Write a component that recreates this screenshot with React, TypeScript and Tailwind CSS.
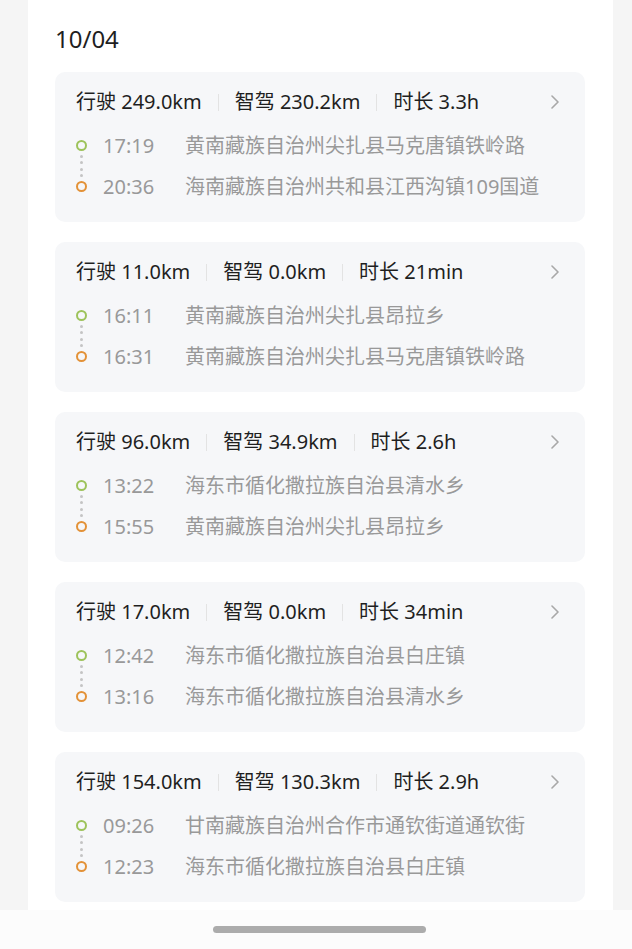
import React from 'react';

type Trip = {
  distance: string;
  smart: string;
  duration: string;
  startTime: string;
  startPlace: string;
  endTime: string;
  endPlace: string;
};

const trips: Trip[] = [
  {
    distance: '249.0km',
    smart: '230.2km',
    duration: '3.3h',
    startTime: '17:19',
    startPlace: '黄南藏族自治州尖扎县马克唐镇铁岭路',
    endTime: '20:36',
    endPlace: '海南藏族自治州共和县江西沟镇109国道',
  },
  {
    distance: '11.0km',
    smart: '0.0km',
    duration: '21min',
    startTime: '16:11',
    startPlace: '黄南藏族自治州尖扎县昂拉乡',
    endTime: '16:31',
    endPlace: '黄南藏族自治州尖扎县马克唐镇铁岭路',
  },
  {
    distance: '96.0km',
    smart: '34.9km',
    duration: '2.6h',
    startTime: '13:22',
    startPlace: '海东市循化撒拉族自治县清水乡',
    endTime: '15:55',
    endPlace: '黄南藏族自治州尖扎县昂拉乡',
  },
  {
    distance: '17.0km',
    smart: '0.0km',
    duration: '34min',
    startTime: '12:42',
    startPlace: '海东市循化撒拉族自治县白庄镇',
    endTime: '13:16',
    endPlace: '海东市循化撒拉族自治县清水乡',
  },
  {
    distance: '154.0km',
    smart: '130.3km',
    duration: '2.9h',
    startTime: '09:26',
    startPlace: '甘南藏族自治州合作市通钦街道通钦街',
    endTime: '12:23',
    endPlace: '海东市循化撒拉族自治县白庄镇',
  },
];

const Divider = () => <div className="mx-[16px] h-[17px] w-px bg-[#e3e3e3]" />;

const TripCard: React.FC<{ trip: Trip }> = ({ trip }) => (
  <div className="h-[150px] rounded-[10px] bg-[#f6f7f9] pl-[21px] pr-[26px] pt-[17px]">
    {/* Summary row */}
    <div className="flex h-[26px] items-center text-[20px] leading-[26px] text-[#1f1f1f]">
      <span>行驶 {trip.distance}</span>
      <Divider />
      <span>智驾 {trip.smart}</span>
      <Divider />
      <span>时长 {trip.duration}</span>
      <svg className="ml-auto" width="8" height="14" viewBox="0 0 8 14" fill="none">
        <path d="M1 1l6 6-6 6" stroke="#a8a8a8" strokeWidth="1.6" strokeLinecap="round" strokeLinejoin="round" />
      </svg>
    </div>

    {/* Start / end rows */}
    <div className="mt-[10px] flex">
      <div className="flex w-[11px] flex-col items-center py-[15px]">
        <div className="h-[11px] w-[11px] rounded-full border-[2.5px] border-[#9dc35b]" />
        <div className="flex flex-1 flex-col items-center justify-evenly py-[1px]">
          <div className="h-[3px] w-[3px] rounded-full bg-[#c4c4c4]" />
          <div className="h-[3px] w-[3px] rounded-full bg-[#c4c4c4]" />
          <div className="h-[3px] w-[3px] rounded-full bg-[#c4c4c4]" />
          <div className="h-[3px] w-[3px] rounded-full bg-[#c4c4c4]" />
        </div>
        <div className="h-[11px] w-[11px] rounded-full border-[2.5px] border-[#e39238]" />
      </div>
      <div className="ml-[16px] flex flex-1 flex-col">
        {[
          [trip.startTime, trip.startPlace],
          [trip.endTime, trip.endPlace],
        ].map(([time, place]) => (
          <div key={time} className="flex h-[41px] items-center whitespace-nowrap text-[#999999]">
            <span className="w-[82px] text-[20px]">{time}</span>
            <span className="text-[20px]">{place}</span>
          </div>
        ))}
      </div>
    </div>
  </div>
);

export default function App() {
  return (
    <div
      className="flex min-h-[949px] flex-col bg-[#f5f5f5]"
      style={{ fontFamily: '"Noto Sans", "Noto Sans CJK SC", sans-serif' }}
    >
      <div className="ml-[28px] mr-[19px] bg-white pb-[8px] pl-[27px] pr-[28px] pt-[24px]">
        <div className="text-[24px] leading-[30px] text-[#1f1f1f]">10/04</div>
        <div className="mt-[18px] flex flex-col gap-[20px]">
          {trips.map((t) => (
            <TripCard key={t.startTime} trip={t} />
          ))}
        </div>
      </div>
      <div className="flex flex-1 items-start justify-center bg-[#fcfcfc] pl-[7px] pt-[16px]">
        <div className="h-[7px] w-[213px] rounded-full bg-[#acacac]" />
      </div>
    </div>
  );
}
